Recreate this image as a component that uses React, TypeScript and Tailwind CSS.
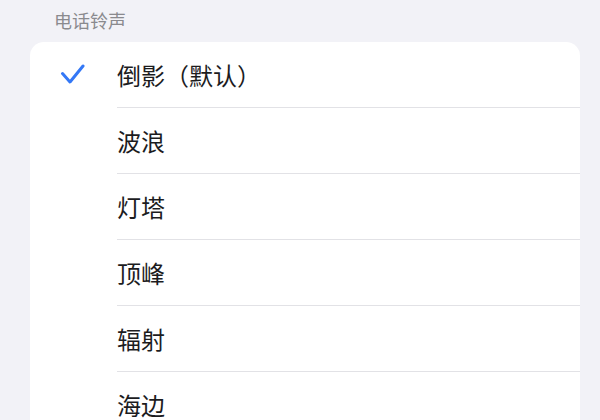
const items = ["倒影（默认）", "波浪", "灯塔", "顶峰", "辐射", "海边"];

export default function App() {
  return (
    <div
      className="w-[600px] h-[420px] overflow-hidden bg-[#f2f2f7]"
      style={{ fontFamily: '"Noto Sans CJK SC", "Noto Sans", sans-serif' }}
    >
      <div className="pl-[54px] pt-[8px] h-[42px] text-[18px] leading-[24px] text-[#8a8a8e]">
        电话铃声
      </div>
      <div className="ml-[30px] w-[550px] bg-white rounded-t-[14px]">
        {items.map((name, i) => (
          <div key={name} className="flex items-stretch h-[66px]">
            <div className="w-[87px] flex items-center justify-center">
              {i === 0 && (
                <svg width="26" height="22" viewBox="0 0 26 22" className="ml-[-2px]">
                  <path
                    d="M2.5 9.5 L10 18 L23 2"
                    fill="none"
                    stroke="#3478f6"
                    strokeWidth="3"
                    strokeLinecap="round"
                    strokeLinejoin="round"
                  />
                </svg>
              )}
            </div>
            <div
              className={
                "flex-1 flex items-center text-[24px] text-[#1c1c1e] " +
                (i < items.length - 1 ? "border-b border-[#e2e2e6]" : "")
              }
            >
              {name}
            </div>
          </div>
        ))}
      </div>
    </div>
  );
}
